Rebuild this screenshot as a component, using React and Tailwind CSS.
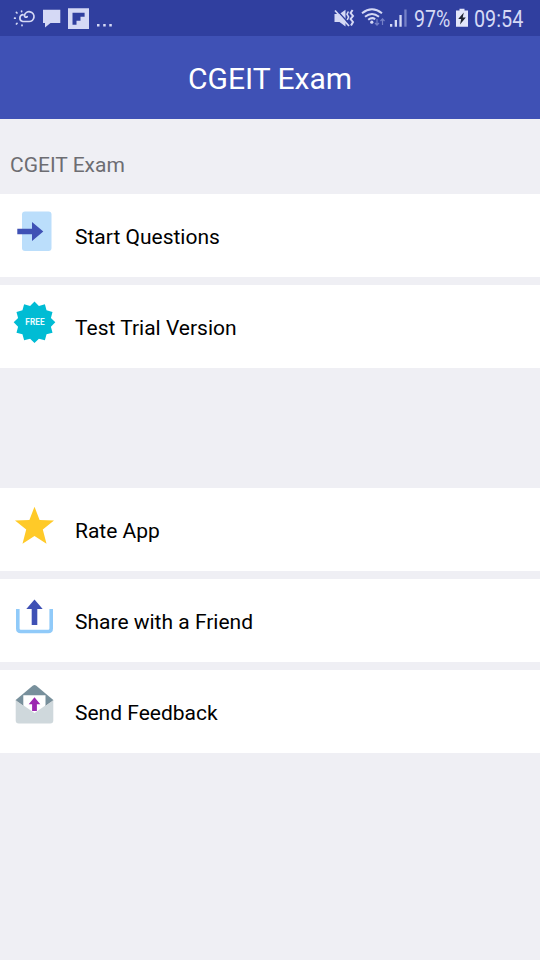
import React from 'react';

const StartIcon = () => (
  <svg className="w-[75px] h-[83px] shrink-0" viewBox="0 0 75 83">
    <rect x="22" y="17.5" width="29.5" height="39.5" rx="3" fill="#BBDEFB" />
    <path d="M17.3 34.7H32V28L43.3 37.5L32 47V40.3H17.3Z" fill="#3F51B5" />
  </svg>
);

const FreeIcon = () => {
  // 12 spikes around the badge centre
  const points = Array.from({ length: 24 }, (_, i) => {
    const r = i % 2 === 0 ? 20.8 : 17;
    const a = (i * Math.PI) / 12;
    return `${34.5 + r * Math.sin(a)},${37.3 - r * Math.cos(a)}`;
  }).join(' ');

  return (
    <svg className="w-[75px] h-[83px] shrink-0" viewBox="0 0 75 83">
      <polygon points={points} fill="#00BCD4" />
      <text x="25.3" y="40.3" textLength="19.4" className="font-['Roboto'] text-[8.2px] font-bold" fill="#E8FBFF">
        FREE
      </text>
    </svg>
  );
};

const StarIcon = () => (
  <svg className="w-[75px] h-[83px] shrink-0" viewBox="0 0 75 83">
    <path d="M34.5 18.7L39.6 31.9L54 32.5L42.8 41.6L46.5 55.8L34.5 47.9L22.5 55.8L26.2 41.6L15 32.5L29.4 31.9Z" fill="#FFCA28" />
  </svg>
);

const ShareIcon = () => (
  <svg className="w-[75px] h-[83px] shrink-0" viewBox="0 0 75 83">
    <path d="M17.8 30V49.5Q17.8 52.5 20.8 52.5H48.2Q51.2 52.5 51.2 49.5V30" fill="none" stroke="#90CAF9" strokeWidth="3.6" />
    <path d="M34.5 20.5L42.7 30H37.3V46H31.7V30H26.3Z" fill="#3F51B5" />
  </svg>
);

const FeedbackIcon = () => (
  <svg className="w-[75px] h-[83px] shrink-0" viewBox="0 0 75 83">
    <path d="M53.3 30L36 15.6Q34.5 14.6 33 15.6L15.7 30L20 36H49Z" fill="#78909C" />
    <path d="M15.7 30L27 37.5H42L53.3 30L48 39H21Z" fill="#455A64" />
    <path d="M23.3 25.3H45.5V38L34.5 44L23.3 38Z" fill="#FFFFFF" />
    <path d="M15.7 30L34.5 43L53.3 30V50.5Q53.3 53.5 50.3 53.5H18.7Q15.7 53.5 15.7 50.5Z" fill="#CFD8DC" />
    <path d="M34.5 27.3L40.3 34.3H36.9V41H32.1V34.3H28.7Z" fill="#9C27B0" />
  </svg>
);

const LeftStatusIcons = () => (
  <svg className="w-[125px] h-9" viewBox="0 0 125 36" fill="none">
    {/* Weather */}
    <g stroke="#D5D9F5" strokeWidth="1.7" strokeLinecap="round">
      <path d="M22.8 14.6A3.5 3.5 0 0 0 22.8 21.5H29A4.9 4.9 0 1 0 24.4 15.2" />
      <path d="M24.4 15.2C24.4 17.3 26.2 17.8 27.2 16.6" />
      <path d="M17 13L16.4 12.4M21.6 11.6V11M15.2 18.2H14.6M17 23.4L16.4 24M22 25V25.6" />
    </g>
    {/* Message */}
    <path d="M43 9.7H60.3V23H50.5L45 27.5V23H43Z" fill="#D5D9F5" />
    {/* Flipboard */}
    <path fillRule="evenodd" d="M68 8.3H89V29H68ZM72.5 12.7V24.8H76.5V20.8H80.5V16.7H84.6V12.7Z" fill="#D5D9F5" />
    <path d="M97 24H99.5V26.5H97ZM103.2 24H105.7V26.5H103.2ZM109.3 24H111.8V26.5H109.3Z" fill="#D5D9F5" />
  </svg>
);

const RightStatusIcons = () => (
  <svg className="w-[79px] h-9" viewBox="332 0 79 36" fill="none">
    {/* Muted, vibrating */}
    <path d="M334.5 14H339.5L345.5 9.7V26.5L339.5 22H334.5Z" fill="#D5D9F5" />
    <path d="M336.5 10L349.5 24" stroke="#303F9F" strokeWidth="1.5" />
    <path d="M335 10.5L349 26" stroke="#D5D9F5" strokeWidth="1.7" />
    <path d="M348.4 11.5L347 14.2L348.6 17L347.2 20" stroke="#D5D9F5" strokeWidth="1.6" />
    <path d="M352.6 10L350.6 13L353 16L350.6 19L353 22L351 25.5" stroke="#D5D9F5" strokeWidth="2" />
    {/* Wifi */}
    <g stroke="#D5D9F5" strokeWidth="2">
      <path d="M362 13.2Q372 5.3 382 13.2" />
      <path d="M365 16.8Q372 11.2 379 16.8" />
      <path d="M368.2 19.8Q372 16.8 375.2 19.2" />
    </g>
    <circle cx="371.8" cy="22.2" r="1.6" fill="#D5D9F5" />
    <path d="M377 19V25M375 23L377 25.2L379 23M382.5 25V19M380.5 21L382.5 18.8L384.5 21" stroke="#7580C7" strokeWidth="1.2" />
    {/* Signal */}
    <path d="M390 24H392.3V26.7H390ZM394.7 20H397V26.7H394.7ZM399.4 15H401.7V26.7H399.4Z" fill="#D5D9F5" />
    <path d="M404.3 9.5H406.6V26.7H404.3Z" fill="#7580C7" />
  </svg>
);

const BatteryIcon = () => (
  <svg className="w-3 h-9" viewBox="0 0 12 36">
    <path d="M3.5 8.7H8.5V10.5H12V26.7H0V10.5H3.5Z" fill="#E3E6FA" />
    <path d="M7.8 12.5L2.2 19H5.2L4 24.5L9.8 17.5H6.7Z" fill="#1F2430" />
  </svg>
);

const MenuItem = ({ icon, label }) => (
  <button className="flex items-center w-full h-[83px] bg-white text-left">
    {icon}
    <span className="pt-[3px] text-[21px] leading-[26px] text-black whitespace-nowrap">{label}</span>
  </button>
);

const App = () => {
  return (
    <div className="w-[540px] h-[960px] overflow-hidden bg-[#EFEFF4] font-['Roboto',sans-serif]">
      {/* Status bar */}
      <div className="flex h-9 bg-[#303F9F] text-[#D5D9F5]">
        <LeftStatusIcons />
        <div className="flex ml-auto pr-[17px]">
          <RightStatusIcons />
          <span className="ml-[3px] w-[36px] pt-[6px] text-[23px] leading-7 whitespace-nowrap">
            <span className="inline-block origin-left scale-x-[0.85]">97%</span>
          </span>
          <span className="ml-[6px]"><BatteryIcon /></span>
          <span className="ml-[6px] w-[49px] pt-[6px] text-[23px] leading-7 whitespace-nowrap">
            <span className="inline-block origin-left scale-x-[0.86]">09:54</span>
          </span>
        </div>
      </div>

      {/* Header */}
      <header className="flex items-center justify-center h-[83px] bg-[#3F51B5]">
        <h1 className="pt-[3px] text-[30px] leading-9 text-white">CGEIT Exam</h1>
      </header>

      <h2 className="h-[75px] pl-[10px] pt-[33px] text-[21px] leading-[26px] text-[#6D6D72]">CGEIT Exam</h2>

      <div className="flex flex-col gap-2">
        <MenuItem icon={<StartIcon />} label="Start Questions" />
        <MenuItem icon={<FreeIcon />} label="Test Trial Version" />
      </div>

      <div className="flex flex-col gap-2 mt-[120px]">
        <MenuItem icon={<StarIcon />} label="Rate App" />
        <MenuItem icon={<ShareIcon />} label="Share with a Friend" />
        <MenuItem icon={<FeedbackIcon />} label="Send Feedback" />
      </div>
    </div>
  );
};

export default App;
